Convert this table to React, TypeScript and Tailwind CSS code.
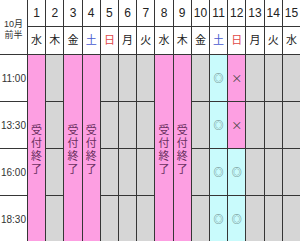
import type { ReactNode } from 'react';

type Col = { date: number; day: string; kind: 'closed' | 'none' | 'open'; slots?: string[] };

const TIMES = ['11:00', '13:30', '16:00', '18:30'];

const COLS: Col[] = [
  { date: 1, day: '水', kind: 'closed' },
  { date: 2, day: '木', kind: 'none' },
  { date: 3, day: '金', kind: 'closed' },
  { date: 4, day: '土', kind: 'closed' },
  { date: 5, day: '日', kind: 'none' },
  { date: 6, day: '月', kind: 'none' },
  { date: 7, day: '火', kind: 'none' },
  { date: 8, day: '水', kind: 'closed' },
  { date: 9, day: '木', kind: 'closed' },
  { date: 10, day: '金', kind: 'none' },
  { date: 11, day: '土', kind: 'open', slots: ['◎', '◎', '◎', '◎'] },
  { date: 12, day: '日', kind: 'open', slots: ['×', '×', '◎', '◎'] },
  { date: 13, day: '月', kind: 'none' },
  { date: 14, day: '火', kind: 'none' },
  { date: 15, day: '水', kind: 'none' },
];

function dayColor(day: string) {
  if (day === '土') return 'text-[#4a5bd0]';
  if (day === '日') return 'text-[#e04848]';
  return 'text-[#222]';
}

function Cell({ className, children }: { className: string; children?: ReactNode }) {
  return <div className={`flex items-center justify-center ${className}`}>{children}</div>;
}

export default function App() {
  return (
    <div className="h-[241px] w-[300px] overflow-hidden bg-white font-['Liberation_Sans','Noto_Sans_CJK_JP',sans-serif]">
      <div className="grid h-[242px] w-[300px] grid-cols-[27px_repeat(15,minmax(0,1fr))] grid-rows-[26px_27px_repeat(4,minmax(0,1fr))] gap-px bg-[#363636]">
        <Cell className="row-span-2 flex-col bg-white pt-[6px] text-[9px] leading-[11px] text-[#333]">
          <span>10月</span>
          <span>前半</span>
        </Cell>
        {COLS.map((c) => (
          <Cell key={`d${c.date}`} className="bg-white text-[12px] text-[#222]">
            {c.date}
          </Cell>
        ))}
        {COLS.map((c) => (
          <Cell key={`w${c.date}`} className={`bg-white text-[11px] ${dayColor(c.day)}`}>
            {c.day}
          </Cell>
        ))}

        {TIMES.map((t, r) => (
          <div
            key={`t${t}`}
            className="flex items-center justify-end bg-white pr-[1px] text-[10px] text-[#333]"
            style={{ gridColumn: 1, gridRow: r + 3 }}
          >
            {t}
          </div>
        ))}

        {COLS.map((c, i) => {
          const col = i + 2;
          if (c.kind === 'closed') {
            return (
              <div
                key={`b${c.date}`}
                className="flex flex-col items-center justify-center bg-[#fd9fe2] pt-[2px] text-[11px] leading-[13px] text-[#6a2f60]"
                style={{ gridColumn: col, gridRow: '3 / span 4' }}
              >
                <span>受</span>
                <span>付</span>
                <span>終</span>
                <span>了</span>
              </div>
            );
          }
          return TIMES.map((t, r) => {
            const s = c.slots?.[r];
            const bg = !s ? 'bg-[#d6d6d6]' : s === '×' ? 'bg-[#fd9fe2]' : 'bg-[#c9fbfc]';
            const fg =
              s === '×'
                ? "font-['Noto_Sans_CJK_JP'] text-[11px] text-[#444]"
                : 'text-[10px] text-[#5b7b7b]';
            return (
              <div
                key={`b${c.date}-${t}`}
                className={`flex items-center justify-center ${bg} ${fg}`}
                style={{ gridColumn: col, gridRow: r + 3 }}
              >
                {s}
              </div>
            );
          });
        })}
      </div>
    </div>
  );
}
